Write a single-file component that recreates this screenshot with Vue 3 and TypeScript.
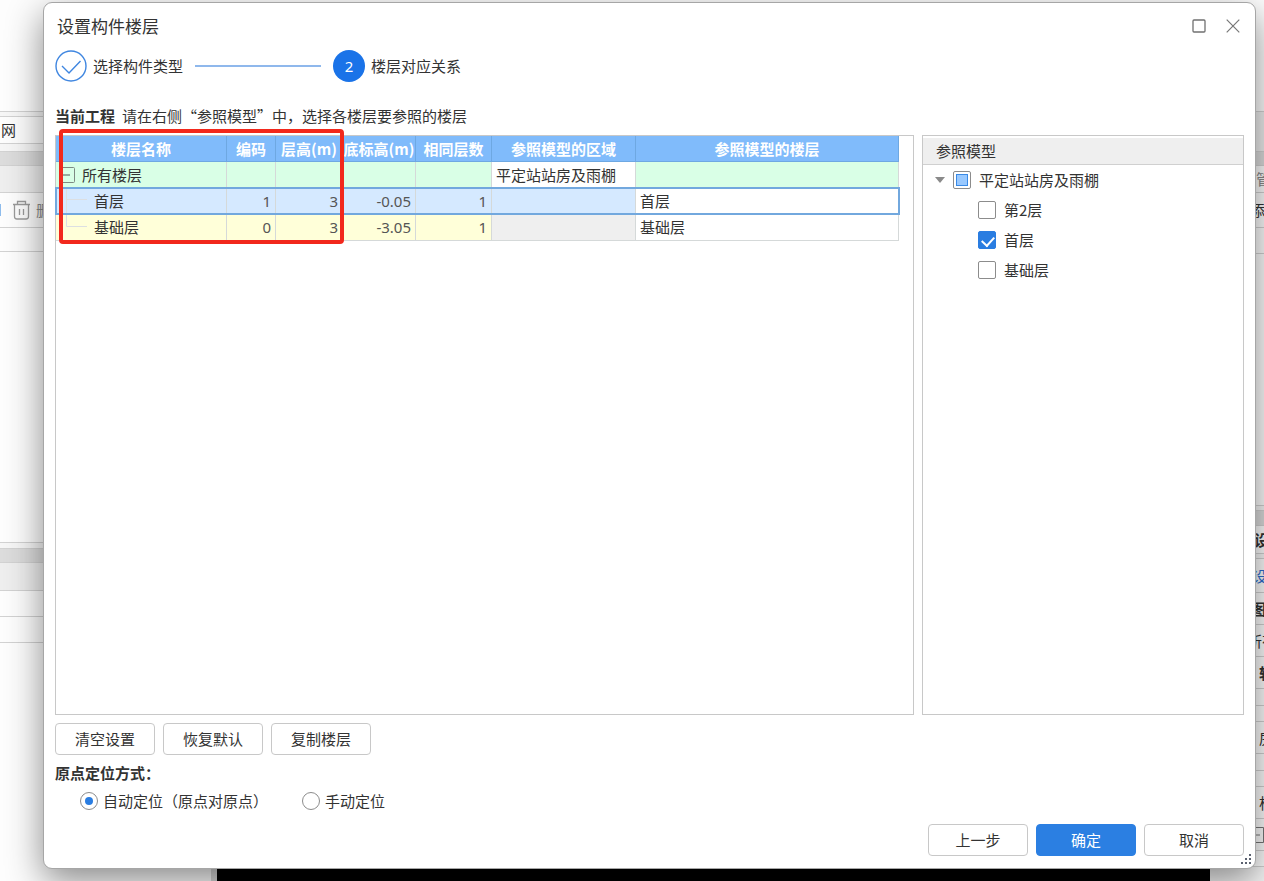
<script setup lang="ts">
import { ref } from 'vue'

interface Band {
  h: number
  tone?: string
  text?: string
  indent?: number
  icon?: string
}

interface FloorRow {
  name: string
  code: string
  height: string
  base: string
  count: string
  floor: string
  kind: string
}

const leftBands: Band[] = [
  { h: 112 },
  { h: 5, tone: 'soft' },
  { h: 27, text: '网', indent: 1 },
  { h: 8, tone: 'soft' },
  { h: 14, tone: 'dark' },
  { h: 27, tone: 'grey' },
  { h: 35, text: '删除', indent: 36, icon: 'trash', tone: 'muted' },
  { h: 24 },
  { h: 291 },
  { h: 6, tone: 'soft' },
  { h: 14, tone: 'dark' },
  { h: 28, tone: 'grey' },
  { h: 26 },
  { h: 26 },
]

const rightBands: Band[] = [
  { h: 112 },
  { h: 40, tone: 'grey' },
  { h: 14, tone: 'dark' },
  { h: 27, tone: 'muted', text: '管', indent: 46 },
  { h: 35, text: '添加', indent: 40 },
  { h: 26 },
  { h: 252 },
  { h: 5, tone: 'soft' },
  { h: 15, tone: 'dark' },
  { h: 28, tone: 'strong', text: '设', indent: 44 },
  { h: 5, tone: 'soft' },
  { h: 34, tone: 'link', text: '设', indent: 42 },
  { h: 32, tone: 'strong', text: '图', indent: 41 },
  { h: 32, text: '所有', indent: 37 },
  { h: 32, tone: 'strong', text: '轴', indent: 49 },
  { h: 17 },
  { h: 16 },
  { h: 32, text: '房', indent: 49 },
  { h: 17 },
  { h: 16 },
  { h: 32, text: '柱', indent: 49 },
  { h: 32, icon: 'box' },
  { h: 16 },
]

const rows: FloorRow[] = [
  { name: '首层', code: '1', height: '3', base: '-0.05', count: '1', floor: '首层', kind: 'selected' },
  { name: '基础层', code: '0', height: '3', base: '-3.05', count: '1', floor: '基础层', kind: 'plain' },
]

const modelFloors = ref([
  { id: 'f2', label: '第2层', on: false },
  { id: 'f1', label: '首层', on: true },
  { id: 'f0', label: '基础层', on: false },
])
const origin = ref('auto')
</script>

<template>
  <div class="workspace">
    <div class="backdrop" aria-hidden="true">
      <div class="rail left">
        <div v-for="(b, i) in leftBands" :key="i" class="band" :class="b.tone" :style="{ height: b.h + 'px' }">
          <svg v-if="b.icon === 'trash'" class="trash" width="32" height="20" viewBox="0 0 32 20">
            <path d="M0 4h1v12H0z" fill="#8ebcec" />
            <path d="M13 4.500h17M17.500 4.500V1.500h8v3M14.500 4.500V16.500q0 2.500 2.500 2.500h9q2.500 0 2.500-2.500V4.500M19.500 9v6M23.500 9v6" fill="none" stroke="#9a9a9a" stroke-width="1.300" />
          </svg>
          <span v-if="b.text" :style="{ marginLeft: b.indent + 'px' }">{{ b.text }}</span>
        </div>
      </div>
      <div class="canvas"></div>
      <div class="rail right">
        <div v-for="(b, i) in rightBands" :key="i" class="band" :class="b.tone" :style="{ height: b.h + 'px' }">
          <svg v-if="b.icon === 'box'" class="toggle" width="16" height="16" viewBox="0 0 16 16">
            <path d="M.5.5h15v15H.5zM4 8h8" fill="none" stroke="#777" />
          </svg>
          <span v-if="b.text" :style="{ marginLeft: b.indent + 'px' }">{{ b.text }}</span>
        </div>
      </div>
    </div>

    <section class="dialog" role="dialog" aria-labelledby="dlg-title">
      <header class="titlebar">
        <h1 id="dlg-title">设置构件楼层</h1>
        <button type="button" class="win" aria-label="最大化">
          <svg width="14" height="14" viewBox="0 0 14 14"><rect x="1" y="1" width="12" height="12" rx="1" fill="none" stroke="#707070" stroke-width="1.300" /></svg>
        </button>
        <button type="button" class="win" aria-label="关闭">
          <svg width="14" height="14" viewBox="0 0 14 14"><path d="M.7.7l12.600 12.600M13.300.7L.7 13.300" fill="none" stroke="#777" stroke-width="1.200" /></svg>
        </button>
      </header>

      <div class="steps">
        <svg width="32" height="32" viewBox="0 0 32 32">
          <circle cx="16" cy="16" r="15" fill="#fff" stroke="#3f86e0" stroke-width="1.400" />
          <path d="M7 16l7 7L25.500 11" fill="none" stroke="#3f86e0" stroke-width="1.400" />
        </svg>
        <span class="step-label">选择构件类型</span>
        <span class="track"></span>
        <span class="badge">2</span>
        <span class="step-label">楼层对应关系</span>
      </div>

      <p class="hint"><strong>当前工程</strong><span>请在右侧“参照模型”中，选择各楼层要参照的楼层</span></p>

      <div class="panels">
        <div class="panel">
          <table>
            <colgroup>
              <col class="c-name" /><col class="c-code" /><col class="c-height" /><col class="c-base" /><col class="c-count" /><col class="c-area" /><col />
            </colgroup>
            <thead>
              <tr>
                <th>楼层名称</th><th>编码</th><th>层高(m)</th><th>底标高(m)</th><th>相同层数</th><th>参照模型的区域</th><th>参照模型的楼层</th>
              </tr>
            </thead>
            <tbody>
              <tr class="group">
                <td class="name">
                  <div class="tree">
                    <button type="button" class="fold" aria-label="折叠">
                      <svg width="16" height="16" viewBox="0 0 16 16"><rect x=".5" y=".5" width="15" height="15" rx="1" fill="none" stroke="#7d8a83" /><path d="M4 8h7" stroke="#555" /></svg>
                    </button>
                    <span>所有楼层</span>
                  </div>
                </td>
                <td></td><td></td><td></td><td></td>
                <td class="edit">平定站站房及雨棚</td>
                <td></td>
              </tr>
              <tr v-for="r in rows" :key="r.name" :class="r.kind">
                <td class="name">
                  <div class="tree">
                    <svg width="38" height="25" viewBox="0 0 38 25">
                      <path :d="r.kind === 'plain' ? 'M10.500 0v11.500H31' : 'M10.500 0v25M10.500 11.500H31'" fill="none" stroke="#dcdfe2" />
                    </svg>
                    <span>{{ r.name }}</span>
                  </div>
                </td>
                <td class="num">{{ r.code }}</td>
                <td class="num">{{ r.height }}</td>
                <td class="num">{{ r.base }}</td>
                <td class="num">{{ r.count }}</td>
                <td class="locked"></td>
                <td class="edit">{{ r.floor }}</td>
              </tr>
            </tbody>
          </table>
          <div class="callout"></div>
        </div>

        <aside class="panel">
          <h2>参照模型</h2>
          <div class="item">
            <button type="button" class="caret" aria-label="折叠">
              <svg width="10" height="6" viewBox="0 0 10 6"><path d="M0 0h10L5 6z" fill="#8a8a8a" /></svg>
            </button>
            <input id="model-all" type="checkbox" class="partial" :indeterminate="true" />
            <label for="model-all">平定站站房及雨棚</label>
          </div>
          <div v-for="f in modelFloors" :key="f.id" class="item child">
            <input :id="f.id" v-model="f.on" type="checkbox" />
            <label :for="f.id">{{ f.label }}</label>
          </div>
        </aside>
      </div>

      <div class="actions">
        <button type="button" class="btn">清空设置</button>
        <button type="button" class="btn">恢复默认</button>
        <button type="button" class="btn">复制楼层</button>
      </div>

      <fieldset>
        <legend>原点定位方式：</legend>
        <div class="radios">
          <label><input v-model="origin" type="radio" name="origin" value="auto" />自动定位（原点对原点）</label>
          <label><input v-model="origin" type="radio" name="origin" value="manual" />手动定位</label>
        </div>
      </fieldset>

      <footer class="actions end">
        <button type="button" class="btn">上一步</button>
        <button type="button" class="btn primary">确定</button>
        <button type="button" class="btn">取消</button>
      </footer>

      <svg class="grip" width="11" height="11" viewBox="0 0 11 11">
        <path d="M8 0h2v2H8zM4 4h2v2H4zM8 4h2v2H8zM0 8h2v2H0zM4 8h2v2H4zM8 8h2v2H8z" fill="#5c6270" />
      </svg>
    </section>
  </div>
</template>

<style>
body {
  margin: 0;
}
</style>

<style scoped>
* {
  box-sizing: border-box;
}
.workspace {
  display: grid;
  grid-template: minmax(0, 1fr) / minmax(0, 1fr);
  height: 100vh;
  overflow: hidden;
  color: #333;
  font: 15px/20px "Noto Sans CJK SC", sans-serif;
}
button,
input {
  font: inherit;
  color: inherit;
}
.backdrop,
.dialog {
  grid-area: 1 / 1;
}

.backdrop {
  display: flex;
  overflow: hidden;
  background: #fff;
}
.rail {
  flex: none;
  overflow: hidden;
  background: #fdfdfd;
}
.left {
  width: 217px;
  background: linear-gradient(#d6d6d6, #d6d6d6) right / 6px 100% no-repeat, #fdfdfd;
}
.right {
  width: 54px;
  background: #f6f6f6;
}
.canvas {
  flex: 1;
  background: linear-gradient(#fdfdfd 50%, #000 50%);
}
.band {
  display: flex;
  align-items: center;
  position: relative;
  overflow: hidden;
  white-space: nowrap;
  border-bottom: 1px solid #d2d2d2;
  background: #fdfdfd;
}
.soft {
  background: #f6f6f6;
}
.dark {
  background: #dcdcdc;
}
.grey {
  background: #eee;
}
.muted {
  color: #8a8a8a;
}
.strong {
  font-weight: 700;
}
.link {
  color: #2f6fd0;
}
.trash {
  position: absolute;
  left: 0;
}
.toggle {
  margin-left: 38px;
}

.dialog {
  position: relative;
  display: flex;
  flex-direction: column;
  margin: 2px 8px 12px 43px;
  padding: 0 11px 12px;
  border: 1px solid #a6a6a6;
  border-radius: 9px;
  background: #fff;
  box-shadow: 0 12px 36px rgba(0, 0, 0, 0.46);
}
.titlebar {
  display: flex;
  align-items: center;
  gap: 20px;
  height: 46px;
  padding: 0 4px 0 2px;
}
h1 {
  flex: 1;
  margin: 0;
  font-size: 17px;
  font-weight: 400;
}
.win,
.fold,
.caret {
  display: flex;
  padding: 0;
  border: 0;
  background: none;
}
.steps {
  display: flex;
  align-items: center;
  height: 33px;
}
.step-label {
  margin-left: 6px;
}
.track {
  width: 126px;
  height: 2px;
  margin: 0 12px;
  background: #8fb8ec;
}
.badge {
  width: 32px;
  height: 32px;
  border-radius: 50%;
  background: #1a73e8;
  color: #fff;
  line-height: 32px;
  text-align: center;
  font-family: "Noto Sans", sans-serif;
}
.hint {
  display: flex;
  gap: 7px;
  margin: 24px 0 9px;
}
.panels {
  flex: 1;
  min-height: 0;
  display: grid;
  grid-template-columns: minmax(0, 1fr) 322px;
  gap: 8px;
}
.panel {
  position: relative;
  min-width: 0;
  border: 1px solid #c8c8c8;
}
.panel table {
  width: calc(100% - 14px);
  table-layout: fixed;
  border-spacing: 0;
}
.c-name {
  width: 171px;
}
.c-code {
  width: 49px;
}
.c-height {
  width: 67px;
}
.c-base {
  width: 73px;
}
.c-count {
  width: 76px;
}
.c-area {
  width: 144px;
}
th,
td {
  height: 26px;
  padding: 0 4px;
  border-right: 1px solid #d5d9d9;
  border-bottom: 1px solid #d5d9d9;
  white-space: nowrap;
  text-align: left;
}
th {
  padding: 0;
  border-color: #6ea8e2;
  background: #80bbfb;
  color: #fff;
  text-align: center;
  font-weight: 700;
}
.group td {
  background: #d9ffe6;
}
.selected td {
  background: #d5e9ff;
}
.plain td {
  height: 27px;
  background: #ffffd9;
}
.plain .locked {
  background: #efefef;
}
tbody .edit {
  background: #fff;
}
.selected {
  outline: 2px solid #72a8de;
  outline-offset: -1px;
}
td.num {
  text-align: right;
  color: #555;
  font-family: "Noto Sans", sans-serif;
}
td.name {
  padding: 0;
}
.tree {
  display: flex;
  align-items: center;
  height: 25px;
}
.fold {
  margin: 0 7px 0 3px;
}
.callout {
  position: absolute;
  left: 3px;
  top: -7px;
  width: 285px;
  height: 115px;
  border: 4px solid #f2281c;
  border-radius: 4px;
}

h2 {
  margin: 2px 0 0;
  padding: 3px 13px;
  border-bottom: 1px solid #d0d0d0;
  background: #efefef;
  font-size: 15px;
  font-weight: 400;
}
.item {
  display: flex;
  align-items: center;
  height: 30px;
  padding-left: 12px;
}
.child {
  padding-left: 55px;
}
.caret {
  margin-right: 8px;
}
.item label {
  margin-left: 8px;
}
input {
  appearance: none;
  position: relative;
  flex: none;
  width: 18px;
  height: 18px;
  margin: 0;
  border: 1px solid #8c8c8c;
  border-radius: 2px;
  background: #fff;
}
input[type="checkbox"]:checked {
  border-color: #2a7de1;
  background: #2a7de1;
}
input[type="checkbox"]:checked::after {
  content: "";
  position: absolute;
  left: 5px;
  top: 2px;
  width: 6px;
  height: 10px;
  border: solid #fff;
  border-width: 0 2px 2px 0;
  transform: rotate(42deg);
}
input.partial::after {
  content: "";
  position: absolute;
  inset: 2px;
  border: 1px solid #3a8ae6;
  background: #99c9ff;
}
input[type="radio"] {
  margin-right: 5px;
  border-radius: 50%;
}
input[type="radio"]:checked::after {
  content: "";
  position: absolute;
  inset: 4px;
  border-radius: 50%;
  background: #2a7de1;
}

.actions {
  display: flex;
  gap: 8px;
  margin-top: 8px;
}
.btn {
  width: 100px;
  height: 32px;
  padding: 0;
  border: 1px solid #c8c8c8;
  border-radius: 4px;
  background: #fff;
}
.primary {
  border-color: #2b7fe2;
  background: #2b7fe2;
  color: #fff;
}
fieldset {
  min-width: 0;
  margin: 8px 0 0;
  padding: 0;
  border: 0;
}
legend {
  padding: 0;
  font-weight: 700;
}
.radios {
  display: flex;
  gap: 34px;
  margin-top: 8px;
  padding-left: 25px;
}
.radios label {
  display: flex;
  align-items: center;
}
.end {
  justify-content: flex-end;
  margin-top: 13px;
}
.grip {
  position: absolute;
  right: 3px;
  bottom: 3px;
}
</style>
